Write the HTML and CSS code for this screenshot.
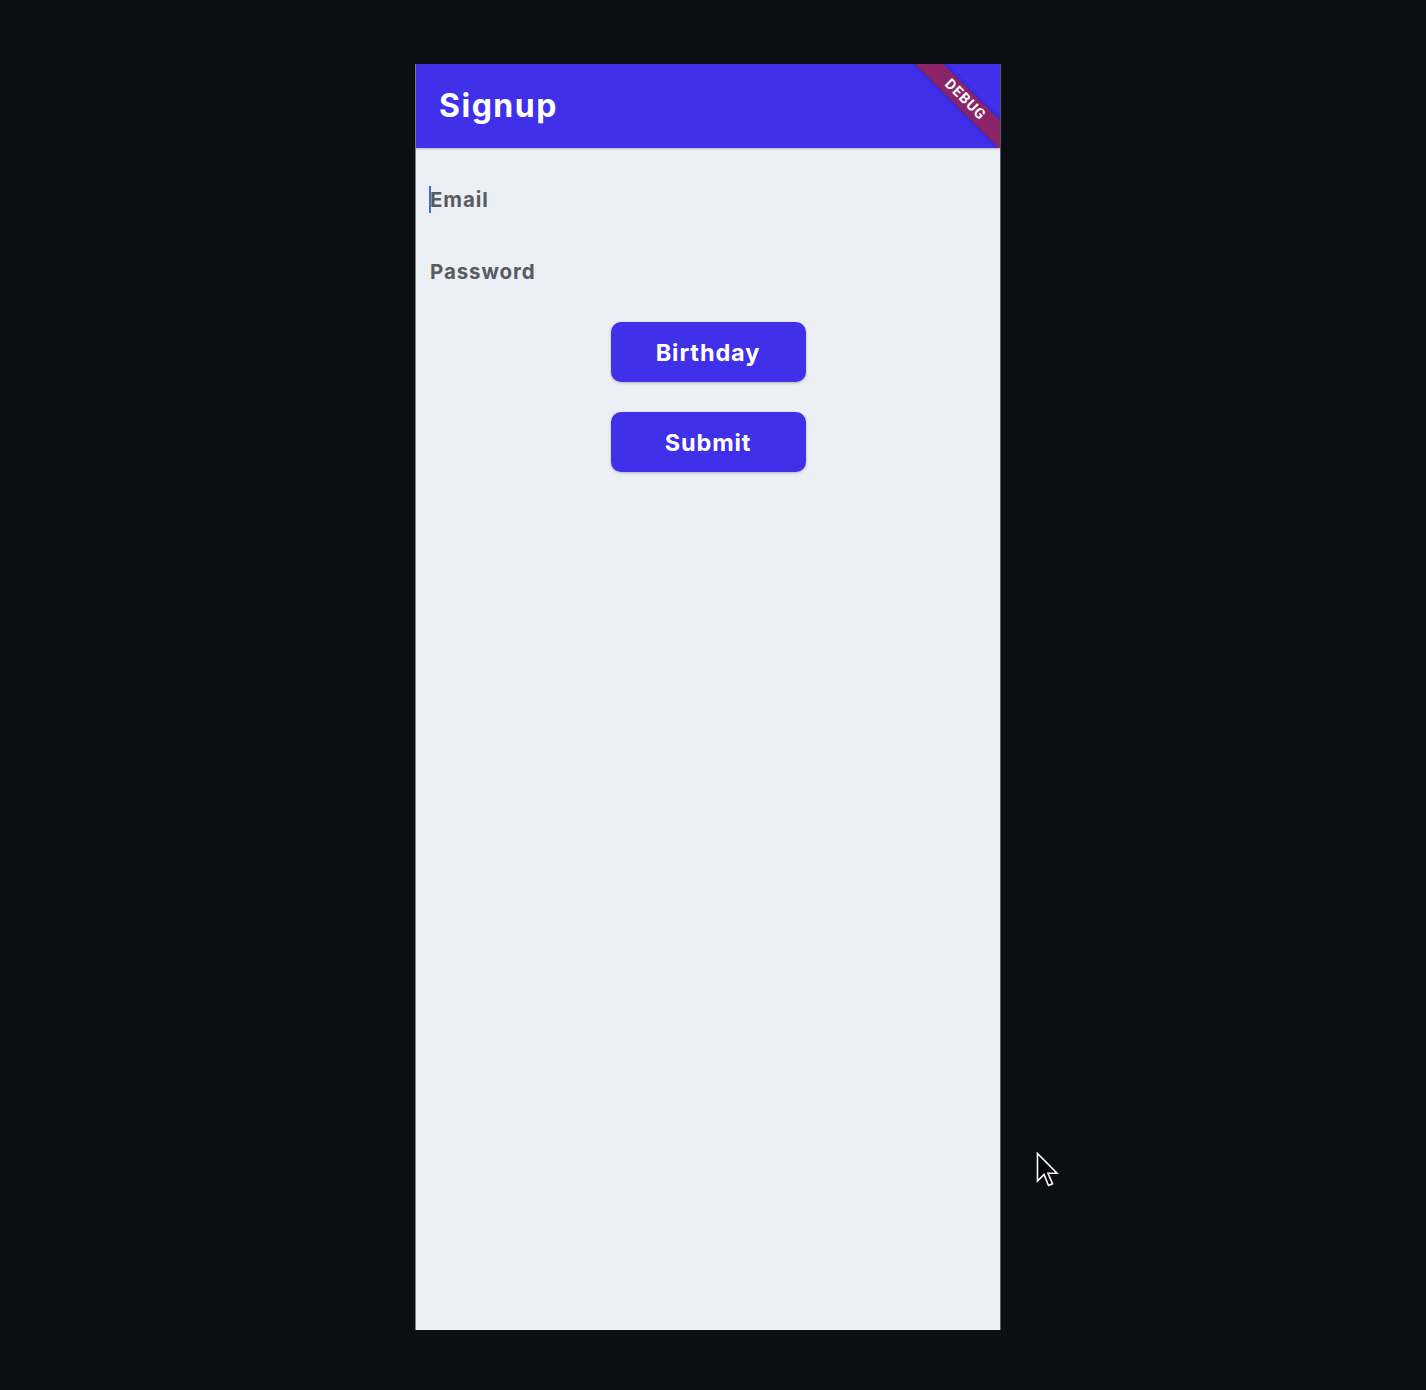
FILE: index.html
```html
<!DOCTYPE html>
<html lang="en">
<head>
<meta charset="utf-8">
<title>Signup</title>
<link rel="stylesheet" href="styles.css">
</head>
<body>
<div class="page">
  <div class="phone">
    <header class="appbar">
      <h1 class="title">Signup</h1>
      <div class="banner"><span>DEBUG</span></div>
    </header>
    <main class="content">
      <div class="field">
        <span class="caret"></span>
        <span class="label">Email</span>
      </div>
      <div class="field">
        <span class="label">Password</span>
      </div>
      <div class="actions">
        <button class="btn" type="button">Birthday</button>
        <button class="btn" type="button">Submit</button>
      </div>
    </main>
  </div>
</div>
<svg class="pointer" width="26" height="38" viewBox="0 0 26 38" aria-hidden="true">
  <path d="M1.5 1.5 L1.5 29 L8 22.5 L12.5 33.5 L16.5 31.8 L12 21.3 L21 21.3 Z" fill="#000" stroke="#fff" stroke-width="1.6" stroke-linejoin="miter"/>
</svg>
</body>
</html>
```
FILE: styles.css
```css
* { box-sizing: border-box; }
html, body {
  margin: 0;
  padding: 0;
  background: #0b0f13;
}
body {
  width: 1426px;
  height: 1390px;
  overflow: hidden;
  position: relative;
  font-family: "Inter", "Noto Sans", sans-serif;
}
.page {
  padding: 64px 0 0 415px;
}
.phone {
  width: 586px;
  height: 1266px;
  background: #eceff4;
  border-left: 1px solid #7e838a;
  border-right: 1px solid #5b6068;
  display: flex;
  flex-direction: column;
}
.appbar {
  position: relative;
  height: 84px;
  flex: none;
  background: #4030ea;
  overflow: hidden;
  display: flex;
  align-items: center;
  padding-left: 23px;
  box-shadow: 0 1px 2px rgba(0,0,0,0.25);
  z-index: 1;
}
.title {
  margin: 0;
  color: #ffffff;
  font-size: 32px;
  font-weight: 700;
  letter-spacing: 1.5px;
  line-height: 1;
}
.banner {
  position: absolute;
  left: 449px;
  top: 26px;
  width: 200px;
  height: 20px;
  background: rgba(183, 28, 28, 0.63);
  transform: rotate(45deg);
  display: flex;
  align-items: center;
  justify-content: center;
  box-shadow: 0 0 4px rgba(0,0,0,0.35);
}
.banner span {
  color: #ffffff;
  font-family: "Roboto", "Inter", sans-serif;
  font-weight: 700;
  font-size: 14.5px;
  letter-spacing: 1px;
  line-height: 1;
}
.content {
  flex: 1;
  padding: 15px 0 0 0;
  display: flex;
  flex-direction: column;
}
.field {
  height: 72px;
  display: flex;
  align-items: center;
  padding-left: 13px;
}
.caret {
  width: 2px;
  height: 27px;
  background: #2f74d8;
}
.field .caret + .label { margin-left: -1px; }
.field .label:only-child { padding-left: 1px; }
.label {
  color: #585b62;
  font-size: 20.5px;
  font-weight: 700;
  letter-spacing: 0.9px;
}
.actions {
  margin-top: 15px;
  display: flex;
  flex-direction: column;
  align-items: center;
  gap: 30px;
}
.btn {
  width: 195px;
  height: 60px;
  border: none;
  border-radius: 10px;
  background: #4030ea;
  color: #ffffff;
  font-family: "Inter", "Noto Sans", sans-serif;
  font-size: 23.5px;
  font-weight: 700;
  letter-spacing: 0.9px;
  box-shadow: 0 1px 3px rgba(0,0,0,0.25);
  padding: 0;
  cursor: pointer;
}
.pointer {
  position: absolute;
  left: 1036px;
  top: 1152px;
}
```
